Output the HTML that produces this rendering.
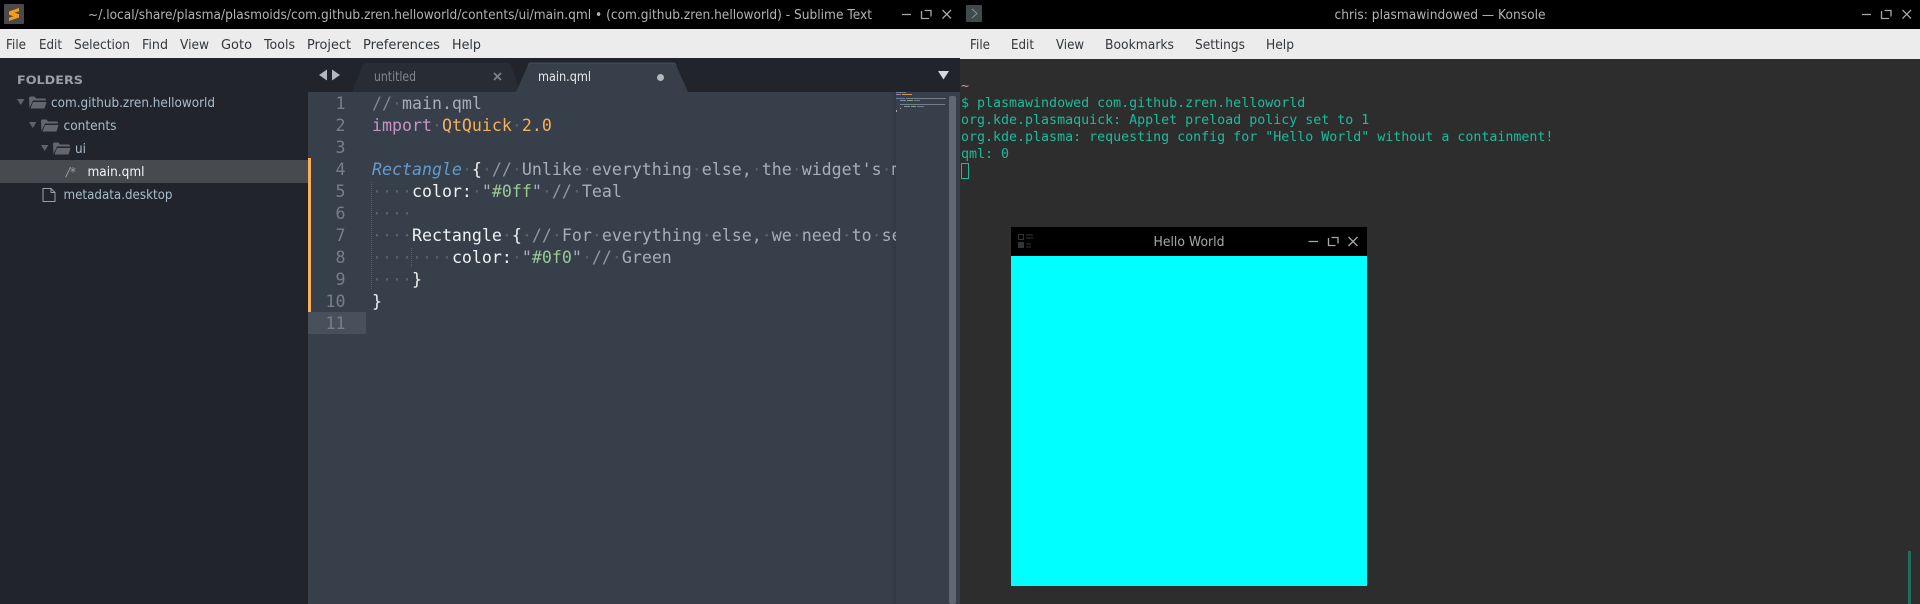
<!DOCTYPE html>
<html><head><meta charset="utf-8"><style>
html,body{margin:0;padding:0;background:#2d2d2d;width:1920px;height:604px;overflow:hidden}
svg{display:block}
.s{font-family:"DejaVu Sans",sans-serif;font-size:13px}
.m{font-family:"DejaVu Sans Mono",monospace;font-size:16.6px;white-space:pre}
.t{font-family:"DejaVu Sans Mono",monospace;font-size:13.3px;fill:#1abc9c;white-space:pre}
.n{text-anchor:end;fill:#76808a}
.d{fill:#56616c}.c{fill:#a7adba}.w{fill:#eff1f5}
</style></head><body>
<svg width="1920" height="604" viewBox="0 0 1920 604" xmlns="http://www.w3.org/2000/svg">
<defs><clipPath id="cl"><rect x="360" y="92" width="536" height="512"/></clipPath>
<linearGradient id="sh"><stop offset="0" stop-color="#2f3740" stop-opacity="0"/><stop offset="1" stop-color="#2f3740" stop-opacity=".8"/></linearGradient></defs>
<rect width="1920" height="604" fill="#2d2d2d"/>
<rect width="1920" height="29" fill="#000"/>
<rect y="29" width="1920" height="30" fill="#ececec"/>
<!-- sublime -->
<rect y="58" width="960" height="546" fill="#21252b"/>
<rect x="308" y="92" width="652" height="512" fill="#37404a"/>
<rect x="890" y="92" width="6" height="512" fill="url(#sh)"/>
<rect x="4" y="4" width="20" height="20" rx="1" fill="#4a4a4a"/>
<path d="M9 11.500L19 8V11.300L14.500 12.800L19 14.300V17.500L9 21V17.700L13.500 16.200L9 14.700Z" fill="#f49b1c"/>
<text class="s" x="88" y="19" fill="#b4b4b4" textLength="784" lengthAdjust="spacingAndGlyphs">~/.local/share/plasma/plasmoids/com.github.zren.helloworld/contents/ui/main.qml • (com.github.zren.helloworld) - Sublime Text</text>
<g stroke="#a8a8a8" stroke-width="1.3" fill="none">
<path d="M902 14.500H911M921.500 11V18.500H929M924.500 10.500H931V16.500M942.500 10L951 18.500M951 10L942.500 18.500"/>
<path d="M1862 14.500H1871M1881.500 11V18.500H1889M1884.500 10.500H1891V16.500M1902.500 10L1911 18.500M1911 10L1902.500 18.500"/>
</g>
<g class="s" fill="#31363b">
<text x="6" y="49" textLength="20" lengthAdjust="spacingAndGlyphs">File</text>
<text x="39" y="49" textLength="23" lengthAdjust="spacingAndGlyphs">Edit</text>
<text x="74" y="49" textLength="56" lengthAdjust="spacingAndGlyphs">Selection</text>
<text x="142" y="49" textLength="26" lengthAdjust="spacingAndGlyphs">Find</text>
<text x="180" y="49" textLength="29" lengthAdjust="spacingAndGlyphs">View</text>
<text x="221" y="49" textLength="31" lengthAdjust="spacingAndGlyphs">Goto</text>
<text x="264" y="49" textLength="31" lengthAdjust="spacingAndGlyphs">Tools</text>
<text x="307" y="49" textLength="44" lengthAdjust="spacingAndGlyphs">Project</text>
<text x="363" y="49" textLength="77" lengthAdjust="spacingAndGlyphs">Preferences</text>
<text x="452" y="49" textLength="29" lengthAdjust="spacingAndGlyphs">Help</text>
</g>
<!-- sidebar -->
<rect y="160" width="308" height="23" fill="#474b4f"/>
<text x="17" y="84" font-family="DejaVu Sans" font-weight="bold" font-size="11.5" fill="#9b9fa3" textLength="66" lengthAdjust="spacingAndGlyphs">FOLDERS</text>
<path d="M17 99H24.500L20.750 105ZM29 122H36.500L32.750 128ZM41 145H48.500L44.750 151Z" fill="#5f6468"/>
<g fill="#63676b">
<path d="M29 98q0-1.500 1.500-1.500h4l1.500 2h8.500q1.500 0 1.500 1.500v.5h-13l-3.500 7.500zM33 102h13.500l-2 6.500h-14z"/>
<path d="M41 121q0-1.500 1.500-1.500h4l1.500 2h8.500q1.500 0 1.500 1.500v.5h-13l-3.500 7.500zM45 125h13.500l-2 6.500h-14z"/>
<path d="M53 144q0-1.500 1.500-1.500h4l1.500 2h8.500q1.500 0 1.500 1.500v.5h-13l-3.500 7.500zM57 148h13.500l-2 6.500h-14z"/>
</g>
<path d="M43 188.500H51L55 192.500V201.500H43ZM51 188.500V192.500H55" fill="none" stroke="#9a9ea2" stroke-width="1"/>
<text x="66" y="176" font-family="DejaVu Sans" font-size="12" font-style="italic" fill="#9a9ea2">/*</text>
<g class="s" fill="#a9bcc9">
<text x="51" y="107" textLength="164" lengthAdjust="spacingAndGlyphs">com.github.zren.helloworld</text>
<text x="63.500" y="130" textLength="53" lengthAdjust="spacingAndGlyphs">contents</text>
<text x="75" y="153" textLength="11" lengthAdjust="spacingAndGlyphs">ui</text>
<text x="87.500" y="176" fill="#f2f4f5" textLength="57" lengthAdjust="spacingAndGlyphs">main.qml</text>
<text x="63.500" y="199" textLength="109" lengthAdjust="spacingAndGlyphs">metadata.desktop</text>
</g>
<!-- tabs -->
<path d="M319 75L327 69.500V80.500ZM340 75L332 69.500V80.500Z" fill="#b4b8bc"/>
<path d="M352 92L363 65Q364 63 366 63H508Q510 63 511 65L520 92Z" fill="#282d35"/>
<path d="M516 92L528 65Q529 63 531 63H673Q675 63 676 65L688 92Z" fill="#37404a"/>
<path d="M528 65Q529 63 531 63H673Q675 63 676 65" fill="none" stroke="#454d57" stroke-width="1"/>
<text class="s" x="374" y="81" fill="#808790" font-size="12" textLength="42" lengthAdjust="spacingAndGlyphs">untitled</text>
<text class="s" x="538" y="81" fill="#e8eaec" font-size="12" textLength="53" lengthAdjust="spacingAndGlyphs">main.qml</text>
<path d="M494 73L501 80M501 73L494 80" stroke="#7b828a" stroke-width="1.800"/>
<circle cx="660.500" cy="77.500" r="3.500" fill="#b3b7bb"/>
<path d="M938 71H949L943.500 79.500Z" fill="#d6d9dc"/>
<!-- gutter -->
<rect x="308" y="312" width="58" height="22" fill="#47505b"/>
<rect x="308" y="158" width="3" height="154" fill="#f9ae58"/>
<g class="m n" text-anchor="end">
<text x="345.500" y="109">1</text><text x="345.500" y="131">2</text><text x="345.500" y="153">3</text><text x="345.500" y="175">4</text><text x="345.500" y="197">5</text><text x="345.500" y="219">6</text><text x="345.500" y="241">7</text><text x="345.500" y="263">8</text><text x="345.500" y="285">9</text><text x="345.500" y="307">10</text><text x="345.500" y="329">11</text>
</g>
<path d="M371.500 182V290M411.500 248V268" stroke="#56616c" stroke-width="1" stroke-dasharray="1 1"/>
<g clip-path="url(#cl)" class="m" xml:space="preserve">
<text x="372" y="109" class="c" xml:space="preserve"><tspan fill="#7c8894">//</tspan><tspan class="d">·</tspan>main.qml</text>
<text x="372" y="131" xml:space="preserve"><tspan fill="#c594c5">import</tspan><tspan class="d">·</tspan><tspan fill="#f9ae58">QtQuick</tspan><tspan class="d">·</tspan><tspan fill="#f9ae58">2.0</tspan></text>
<text x="372" y="175" xml:space="preserve"><tspan fill="#6699cc" font-style="italic">Rectangle</tspan><tspan class="d">·</tspan><tspan class="w">{</tspan><tspan class="d">·</tspan><tspan fill="#8d99a5">//</tspan><tspan class="d">·</tspan><tspan fill="#a7adba">Unlike</tspan><tspan class="d">·</tspan><tspan fill="#a7adba">everything</tspan><tspan class="d">·</tspan><tspan fill="#a7adba">else,</tspan><tspan class="d">·</tspan><tspan fill="#a7adba">the</tspan><tspan class="d">·</tspan><tspan fill="#a7adba">widget's</tspan><tspan class="d">·</tspan><tspan fill="#a7adba">main</tspan></text>
<text x="372" y="197" xml:space="preserve"><tspan class="d">····</tspan><tspan class="w">color:</tspan><tspan class="d">·</tspan><tspan fill="#a7adba">"</tspan><tspan fill="#99c794">#0ff</tspan><tspan fill="#a7adba">"</tspan><tspan class="d">·</tspan><tspan fill="#8d99a5">//</tspan><tspan class="d">·</tspan><tspan fill="#a7adba">Teal</tspan></text>
<text x="372" y="219" class="d" xml:space="preserve">····</text>
<text x="372" y="241" xml:space="preserve"><tspan class="d">····</tspan><tspan class="w">Rectangle</tspan><tspan class="d">·</tspan><tspan class="w">{</tspan><tspan class="d">·</tspan><tspan fill="#8d99a5">//</tspan><tspan class="d">·</tspan><tspan fill="#a7adba">For</tspan><tspan class="d">·</tspan><tspan fill="#a7adba">everything</tspan><tspan class="d">·</tspan><tspan fill="#a7adba">else,</tspan><tspan class="d">·</tspan><tspan fill="#a7adba">we</tspan><tspan class="d">·</tspan><tspan fill="#a7adba">need</tspan><tspan class="d">·</tspan><tspan fill="#a7adba">to</tspan><tspan class="d">·</tspan><tspan fill="#a7adba">set</tspan></text>
<text x="372" y="263" xml:space="preserve"><tspan class="d">········</tspan><tspan class="w">color:</tspan><tspan class="d">·</tspan><tspan fill="#a7adba">"</tspan><tspan fill="#99c794">#0f0</tspan><tspan fill="#a7adba">"</tspan><tspan class="d">·</tspan><tspan fill="#8d99a5">//</tspan><tspan class="d">·</tspan><tspan fill="#a7adba">Green</tspan></text>
<text x="372" y="285" xml:space="preserve"><tspan class="d">····</tspan><tspan class="w">}</tspan></text>
<text x="372" y="307" class="w" xml:space="preserve">}</text>
</g>
<!-- minimap -->
<rect x="949" y="96" width="7" height="508" rx="2" fill="#5f6873"/>
<g opacity=".75">
<rect x="896" y="92" width="10" height="1" fill="#8a94a0"/>
<rect x="896" y="94" width="5" height="1" fill="#c594c5"/><rect x="902" y="94" width="10" height="1" fill="#f9ae58"/>
<rect x="896" y="98" width="9" height="1" fill="#6699cc"/><rect x="906" y="98" width="40" height="1" fill="#8a94a0"/>
<rect x="900" y="100" width="6" height="1" fill="#aab"/><rect x="907" y="100" width="6" height="1" fill="#99c794"/><rect x="914" y="100" width="6" height="1" fill="#8a94a0"/>
<rect x="900" y="104" width="45" height="1" fill="#8a94a0"/>
<rect x="904" y="106" width="6" height="1" fill="#aab"/><rect x="911" y="106" width="5" height="1" fill="#99c794"/><rect x="917" y="106" width="7" height="1" fill="#8a94a0"/>
<rect x="900" y="108" width="1" height="1" fill="#ccc"/><rect x="896" y="110" width="1" height="2" fill="#ccc"/>
</g>
<!-- konsole -->
<rect x="960" y="59" width="960" height="545" fill="#2d2d2d"/>
<rect x="966" y="5" width="16" height="17" rx="1" fill="#3f4a4a"/>
<path d="M972 9L977 13.500L972 18" fill="none" stroke="#8a9292" stroke-width="1"/>
<text class="s" x="1440" y="19" fill="#b4b4b4" text-anchor="middle" textLength="211" lengthAdjust="spacingAndGlyphs">chris: plasmawindowed — Konsole</text>
<g class="s" fill="#31363b">
<text x="970" y="49" textLength="20" lengthAdjust="spacingAndGlyphs">File</text>
<text x="1011" y="49" textLength="23" lengthAdjust="spacingAndGlyphs">Edit</text>
<text x="1056" y="49" textLength="28" lengthAdjust="spacingAndGlyphs">View</text>
<text x="1105" y="49" textLength="69" lengthAdjust="spacingAndGlyphs">Bookmarks</text>
<text x="1195" y="49" textLength="50" lengthAdjust="spacingAndGlyphs">Settings</text>
<text x="1266" y="49" textLength="28" lengthAdjust="spacingAndGlyphs">Help</text>
</g>
<text class="t" x="961" y="90" style="fill:#d29a94">~</text>
<text class="t" x="961" y="107" xml:space="preserve">$ plasmawindowed com.github.zren.helloworld</text>
<text class="t" x="961" y="124" xml:space="preserve">org.kde.plasmaquick: Applet preload policy set to 1</text>
<text class="t" x="961" y="141" xml:space="preserve">org.kde.plasma: requesting config for "Hello World" without a containment!</text>
<text class="t" x="961" y="158" xml:space="preserve">qml: 0</text>
<rect x="961.500" y="163.500" width="7" height="15" fill="none" stroke="#1abc9c" stroke-width="1"/>
<rect x="1908" y="551" width="3" height="53" fill="#1f6f5c"/>
<!-- hello -->
<rect x="1011" y="227" width="356" height="29" fill="#000"/>
<rect x="1011" y="256" width="356" height="330" fill="#0ff"/>
<g fill="none" stroke="#2f3438" stroke-width="1">
<rect x="1018.500" y="234.500" width="5" height="5"/><path d="M1026 235H1033M1026 238H1033M1026 244H1031M1026 247H1031"/></g>
<rect x="1018" y="242" width="6" height="6" fill="#2f3438"/>
<text class="s" x="1189" y="246" fill="#a8a8a8" text-anchor="middle" textLength="71" lengthAdjust="spacingAndGlyphs">Hello World</text>
<path d="M1308.500 241.500H1318M1328.500 238V245.500H1335.500M1331.500 237.500H1338V243.500M1348.500 237L1357.500 246M1357.500 237L1348.500 246" fill="none" stroke="#a8a8a8" stroke-width="1.300"/>
</svg>
</body></html>
